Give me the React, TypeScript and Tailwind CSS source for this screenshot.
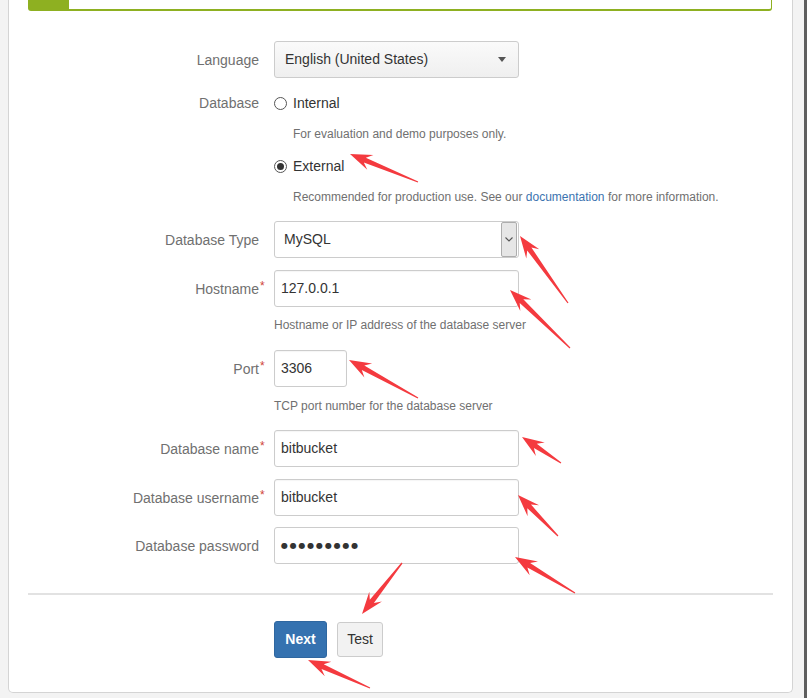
import React from "react";

type Pt = [number, number];

function arrowPoints(tail: Pt, tip: Pt): string {
  const dx = tip[0] - tail[0];
  const dy = tip[1] - tail[1];
  const len = Math.hypot(dx, dy);
  const ux = dx / len;
  const uy = dy / len;
  const nx = -uy;
  const ny = ux;
  const L = 22;
  const W = 8;
  const S = 2.6;
  const T = 0.6;
  const back = [tip[0] - ux * L, tip[1] - uy * L];
  const join = [tip[0] - ux * (L - 6), tip[1] - uy * (L - 6)];
  const pts: number[][] = [
    [tail[0] + nx * T, tail[1] + ny * T],
    [join[0] + nx * S, join[1] + ny * S],
    [back[0] + nx * W, back[1] + ny * W],
    [tip[0], tip[1]],
    [back[0] - nx * W, back[1] - ny * W],
    [join[0] - nx * S, join[1] - ny * S],
    [tail[0] - nx * T, tail[1] - ny * T],
  ];
  return pts.map((p) => `${p[0].toFixed(1)},${p[1].toFixed(1)}`).join(" ");
}

const arrows: [Pt, Pt][] = [
  [[418, 182], [350, 154]],
  [[568, 303], [520, 236]],
  [[570, 348], [510, 290]],
  [[418, 398], [349, 360]],
  [[561, 463], [522, 437]],
  [[558, 536], [518, 495]],
  [[575, 593], [515, 557]],
  [[402, 563], [362, 614]],
  [[370, 688], [308, 660]],
];

function Label({ text, required }: { text: string; required?: boolean }) {
  return (
    <div className="w-[231px] shrink-0 text-right text-[14px] text-[#707070] leading-[20px]">
      <span className="relative">
        {text}
        {required && (
          <span className="absolute left-full top-[-5px] ml-[1px] text-[12px] text-[#d04437]">*</span>
        )}
      </span>
    </div>
  );
}

function TextInput({ value, width = "w-[245px]" }: { value: string; width?: string }) {
  return (
    <div
      className={`${width} h-[37px] border border-[#cccccc] rounded-[3px] bg-white flex items-center pl-[6px] text-[14px] text-[#333333] shadow-[inset_0_1px_1px_rgba(0,0,0,0.04)]`}
    >
      {value}
    </div>
  );
}

function Radio({ checked }: { checked?: boolean }) {
  return (
    <span className="w-[13px] h-[13px] rounded-full border border-[#555555] bg-white flex items-center justify-center shrink-0">
      {checked && <span className="w-[7px] h-[7px] rounded-full bg-[#333333]" />}
    </span>
  );
}

export default function App() {
  return (
    <div className="relative w-[809px] h-[698px] bg-[#f3f3f3] flex font-['Liberation_Sans',Arial,sans-serif] overflow-hidden">
      <div className="ml-[8px] w-[785px] h-[693px] bg-white border border-t-0 border-[#d4d4d4] rounded-b-[5px] pl-[19px] pr-[20px] flex flex-col shrink-0">
        {/* green message box top */}
        <div className="h-[11px] w-[744px] border-x border-b-2 border-[#8eb021] rounded-b-[3px] flex">
          <div className="w-[40px] h-full bg-[#8eb021]" />
        </div>

        {/* Language */}
        <div className="flex items-center mt-[30px]">
          <Label text="Language" />
          <div className="ml-[15px] w-[245px] h-[37px] border border-[#cccccc] rounded-[3px] bg-gradient-to-b from-[#fafafa] to-[#efefef] flex items-center justify-between pl-[10px] pr-[12px] text-[14px] text-[#333333]">
            <span>English (United States)</span>
            <span className="w-0 h-0 border-x-[4px] border-x-transparent border-t-[5px] border-t-[#555555]" />
          </div>
        </div>

        {/* Database radios */}
        <div className="flex mt-[15px]">
          <Label text="Database" />
          <div className="ml-[15px] flex flex-col">
            <div className="flex items-center h-[20px] gap-[6px] text-[14px] text-[#333333]">
              <Radio />
              <span>Internal</span>
            </div>
            <div className="ml-[19px] mt-[13px] h-[16px] text-[12px] leading-[16px] text-[#707070]">
              For evaluation and demo purposes only.
            </div>
            <div className="flex items-center h-[20px] gap-[6px] mt-[14px] text-[14px] text-[#333333]">
              <Radio checked />
              <span>External</span>
            </div>
            <div className="ml-[19px] mt-[13px] h-[16px] text-[12px] leading-[16px] text-[#707070] whitespace-nowrap">
              Recommended for production use. See our{" "}
              <span className="text-[#3b73af]">documentation</span> for more information.
            </div>
          </div>
        </div>

        {/* Database Type */}
        <div className="flex items-center mt-[16px]">
          <Label text="Database Type" />
          <div className="ml-[15px] w-[245px] h-[37px] border border-[#cccccc] rounded-[3px] bg-white flex items-center justify-between pl-[9px] pr-[1px] text-[14px] text-[#333333]">
            <span>MySQL</span>
            <span className="w-[16px] h-[35px] bg-[#e6e6e6] border border-[#adadad] rounded-[2px] flex items-center justify-center">
              <svg width="8" height="5" viewBox="0 0 8 5">
                <path d="M0.5 0.5 L4 4 L7.5 0.5" fill="none" stroke="#555" strokeWidth="1.1" />
              </svg>
            </span>
          </div>
        </div>

        {/* Hostname */}
        <div className="flex items-center mt-[12px]">
          <Label text="Hostname" required />
          <div className="ml-[15px]">
            <TextInput value="127.0.0.1" />
          </div>
        </div>
        <div className="ml-[246px] mt-[10px] h-[16px] text-[12px] leading-[16px] text-[#707070]">
          Hostname or IP address of the database server
        </div>

        {/* Port */}
        <div className="flex items-center mt-[17px]">
          <Label text="Port" required />
          <div className="ml-[15px]">
            <TextInput value="3306" width="w-[73px]" />
          </div>
        </div>
        <div className="ml-[246px] mt-[11px] h-[16px] text-[12px] leading-[16px] text-[#707070]">
          TCP port number for the database server
        </div>

        {/* Database name */}
        <div className="flex items-center mt-[16px]">
          <Label text="Database name" required />
          <div className="ml-[15px]">
            <TextInput value="bitbucket" />
          </div>
        </div>

        {/* Database username */}
        <div className="flex items-center mt-[12px]">
          <Label text="Database username" required />
          <div className="ml-[15px]">
            <TextInput value="bitbucket" />
          </div>
        </div>

        {/* Database password */}
        <div className="flex items-center mt-[11px]">
          <Label text="Database password" />
          <div className="ml-[15px] w-[245px] h-[37px] border border-[#cccccc] rounded-[3px] bg-white flex items-center pl-[6px] text-[8px] tracking-[1.8px] text-[#333333] font-['DejaVu_Sans',sans-serif]">
            ●●●●●●●●●
          </div>
        </div>

        {/* divider */}
        <div className="mt-[29px] h-[2px] w-[745px] bg-[#e2e2e2]" />

        {/* buttons */}
        <div className="flex items-center mt-[26px] ml-[246px] gap-[10px]">
          <div className="w-[53px] h-[37px] rounded-[3px] bg-[#3572b0] border border-[#2f67a0] flex items-center justify-center text-[14px] font-bold text-white">
            Next
          </div>
          <div className="w-[46px] h-[35px] rounded-[3px] bg-[#f2f2f2] border border-[#cccccc] flex items-center justify-center text-[14px] text-[#333333]">
            Test
          </div>
        </div>
      </div>

      <div className="w-[11px] shrink-0" />
      <div className="w-[3px] h-full bg-[#5e5e5e] shrink-0" />
      <div className="flex-1 bg-white" />

      <svg className="absolute left-0 top-0 pointer-events-none" width="809" height="698" viewBox="0 0 809 698">
        {arrows.map(([tail, tip], i) => (
          <polygon key={i} points={arrowPoints(tail, tip)} fill="#f43a3f" />
        ))}
      </svg>
    </div>
  );
}
